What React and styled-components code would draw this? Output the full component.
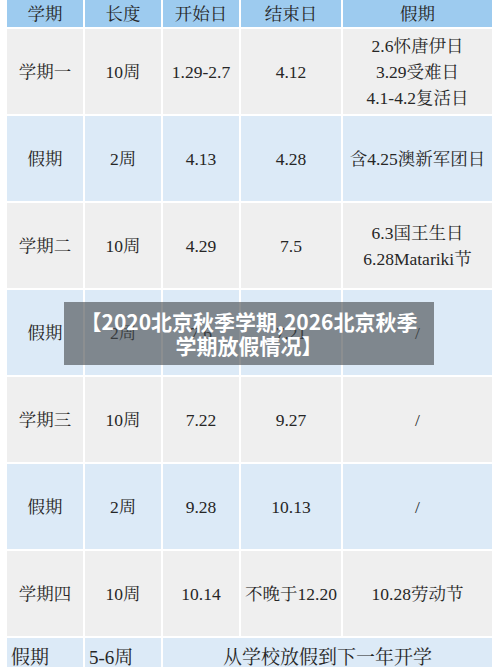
import React from 'react';
import styled, { createGlobalStyle } from 'styled-components';

const GlobalStyle = createGlobalStyle`
  html, body {
    margin: 0;
    padding: 0;
    background: #ffffff;
    overflow: hidden;
  }
`;

const Page = styled.div`
  position: relative;
  width: 500px;
  height: 667px;
  overflow: hidden;
  background: #ffffff;
  font-family: "Liberation Serif", "Noto Serif CJK SC", "Noto Sans CJK SC", serif;
  color: #262626;
`;

const Table = styled.div`
  display: grid;
  grid-template-columns: 76px 76px 76px 100px 149px;
  grid-template-rows: 27px repeat(7, 85px) 40px;
  gap: 2px;
  margin-left: 7px;
  width: 485px;
`;

const tones = {
  head: '#9dcbef',
  grey: '#efefef',
  blue: '#dceaf7',
};

const Cell = styled.div`
  display: flex;
  flex-direction: column;
  align-items: ${p => (p.$left ? 'flex-start' : 'center')};
  justify-content: ${p => (p.$top ? 'flex-start' : 'center')};
  text-align: center;
  background: ${p => tones[p.$tone] || tones.grey};
  font-size: ${p => (p.$big ? '19px' : '17.5px')};
  line-height: 26px;
  padding: ${p => (p.$top ? '7px 4px 0' : '0')};
  grid-column: ${p => (p.$span ? `span ${p.$span}` : 'auto')};
  white-space: nowrap;
  box-sizing: border-box;
`;

const Banner = styled.div`
  position: absolute;
  left: 64px;
  top: 302px;
  width: 370px;
  height: 63px;
  box-sizing: border-box;
  padding-top: 7px;
  background: rgba(70, 74, 78, 0.62);
  color: #ffffff;
  font-family: "Noto Sans CJK SC", "Noto Sans", sans-serif;
  font-weight: 700;
  font-size: 21px;
  line-height: 24px;
  text-align: center;
`;

const header = ['学期', '长度', '开始日', '结束日', '假期'];

const rows = [
  { tone: 'grey', cells: ['学期一', '10周', '1.29-2.7', '4.12', ['2.6怀唐伊日', '3.29受难日', '4.1-4.2复活日']] },
  { tone: 'blue', cells: ['假期', '2周', '4.13', '4.28', '含4.25澳新军团日'] },
  { tone: 'grey', cells: ['学期二', '10周', '4.29', '7.5', ['6.3国王生日', '6.28Matariki节']] },
  { tone: 'blue', cells: ['假期', '2周', '7.6', '7.21', '/'] },
  { tone: 'grey', cells: ['学期三', '10周', '7.22', '9.27', '/'] },
  { tone: 'blue', cells: ['假期', '2周', '9.28', '10.13', '/'] },
  { tone: 'grey', cells: ['学期四', '10周', '10.14', '不晚于12.20', '10.28劳动节'] },
];

function App() {
  return (
    <Page>
      <GlobalStyle />
      <Table>
        {header.map(h => (
          <Cell key={h} $tone="head">{h}</Cell>
        ))}
        {rows.map((row, i) =>
          row.cells.map((c, j) => (
            <Cell key={`${i}-${j}`} $tone={row.tone}>
              {Array.isArray(c) ? c.map(line => <span key={line}>{line}</span>) : c}
            </Cell>
          ))
        )}
        <Cell $tone="blue" $left $top $big>假期</Cell>
        <Cell $tone="blue" $left $top $big>5-6周</Cell>
        <Cell $tone="blue" $top $big $span={3}>从学校放假到下一年开学</Cell>
      </Table>
      <Banner>
        【2020北京秋季学期,2026北京秋季<br />学期放假情况】
      </Banner>
    </Page>
  );
}

export default App;
